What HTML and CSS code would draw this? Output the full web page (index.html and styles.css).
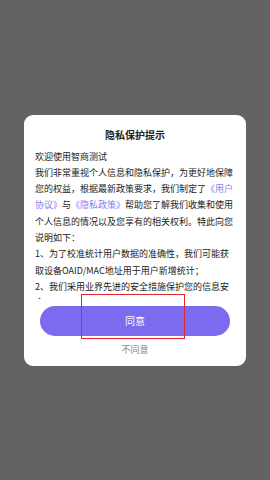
FILE: index.html
```html
<!DOCTYPE html>
<html>
<head>
    <title>隐私保护提示</title>
    <link rel="stylesheet" href="styles.css">
</head>
<body>
    <div class="dialog">
        <h1 class="title">隐私保护提示</h1>
        <div class="content">
            <p>欢迎使用智商测试</p>
            <p>我们非常重视个人信息和隐私保护，为更好地保障您的权益，根据最新政策要求，我们制定了<a href="#">《用户协议》</a>与<a href="#">《隐私政策》</a>帮助您了解我们收集和使用个人信息的情况以及您享有的相关权利。特此向您说明如下：</p>
            <p>1、为了校准统计用户数据的准确性，我们可能获取设备OAID/MAC地址用于用户新增统计；</p>
            <p>2、我们采用业界先进的安全措施保护您的信息安全：</p>
        </div>
        <button class="agree">同意</button>
        <div class="disagree">不同意</div>
        <div class="highlight"></div>
    </div>
</body>
</html>
```

FILE: styles.css
```css
html, body {
    margin: 0;
    height: 100%;
}
body {
    background-color: #636363;
    font-family: "Noto Sans CJK SC", "Noto Sans", sans-serif;
    display: flex;
    align-items: center;
    justify-content: center;
}
.dialog {
    position: relative;
    width: 222px;
    box-sizing: border-box;
    padding: 13px 11px 9px;
    background: white;
    border-radius: 9px;
    display: flex;
    flex-direction: column;
    align-items: center;
}
.title {
    margin: 0;
    font-size: 10px;
    line-height: 14px;
    font-weight: bold;
    color: #222;
}
.content {
    margin-top: 7px;
    width: 200px;
    height: 150px;
    overflow: hidden;
    font-size: 9px;
    line-height: 16.3px;
    color: #222;
}
.content p {
    margin: 0;
}
.content a {
    color: #8a7cf3;
    text-decoration: none;
}
.agree {
    margin-top: 7px;
    width: 190px;
    height: 30px;
    border: none;
    border-radius: 15px;
    background-color: #7b6bef;
    color: white;
    font-family: inherit;
    font-size: 10px;
}
.disagree {
    margin-top: 7px;
    font-size: 9px;
    line-height: 14px;
    color: #888;
}
.highlight {
    position: absolute;
    left: 57px;
    top: 179px;
    width: 102px;
    height: 43px;
    border: 1.5px solid #e3262b;
}
```
